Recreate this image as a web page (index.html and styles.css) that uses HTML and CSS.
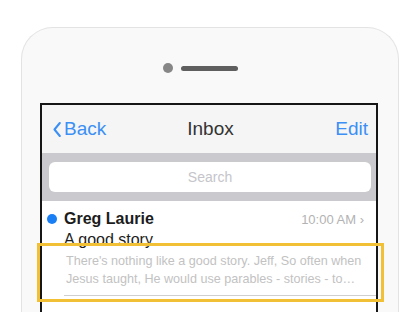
FILE: index.html
```html
<!doctype html>
<html lang="en">
    <head>
        <meta charset="UTF-8" />
        <meta name="viewport" content="width=device-width, initial-scale=1.0" />
        <title>Inbox</title>
        <link rel="stylesheet" href="styles.css">
    </head>
    <body>
        <div class="phone">
            <div class="sensors">
                <span class="camera"></span>
                <span class="speaker"></span>
            </div>

            <div class="screen">
                <div class="nav">
                    <a class="nav-back">
                        <svg width="8" height="15" viewBox="0 0 8 15">
                            <path d="M6.8 1 L1.5 7.5 L6.8 14" fill="none" stroke="#3b8ff5" stroke-width="2" stroke-linecap="round" stroke-linejoin="round" />
                        </svg>
                        Back
                    </a>
                    <span class="nav-title">Inbox</span>
                    <a class="nav-edit">Edit</a>
                </div>

                <div class="search-bar">
                    <div class="search-field">Search</div>
                </div>

                <div class="mail">
                    <span class="unread"></span>
                    <div class="mail-body">
                        <div class="mail-head">
                            <span class="sender">Greg Laurie</span>
                            <span class="time">10:00 AM ›</span>
                        </div>
                        <div class="subject">A good story</div>
                        <p class="preview">There's nothing like a good story. Jeff, So often when Jesus taught, He would use parables - stories - to…</p>
                    </div>
                </div>
            </div>
        </div>

        <!-- highlight over the preview text -->
        <div class="highlight"></div>
    </body>
</html>
```

FILE: styles.css
```css
body {
    margin: 0;
    background: #fff;
    font-family: "Liberation Sans", Arial, sans-serif;
    overflow: hidden;
}
.phone {
    box-sizing: border-box;
    width: 378px;
    height: 285px;
    margin: 27px 0 0 21px;
    background: #f9f9f9;
    border: 1px solid #e3e3e3;
    border-bottom: none;
    border-radius: 32px 32px 0 0;
    overflow: hidden;
}
.sensors {
    display: flex;
    align-items: center;
    gap: 8px;
    height: 10px;
    padding: 35px 0 0 141px;
}
.camera {
    width: 10px;
    height: 10px;
    border-radius: 50%;
    background: #878787;
}
.speaker {
    width: 57px;
    height: 5px;
    border-radius: 3px;
    background: #5f5f5f;
}
.screen {
    width: 334px;
    height: 207px;
    margin: 30px 0 0 18px;
    background: #fff;
    border: 2px solid #161616;
    border-bottom: none;
    overflow: hidden;
}
.nav {
    display: flex;
    align-items: center;
    justify-content: space-between;
    height: 48px;
    padding: 0 8px 0 11px;
    background: #f5f5f5;
    font-size: 19px;
}
.nav-back,
.nav-edit {
    display: flex;
    align-items: center;
    gap: 3px;
    color: #3b8ff5;
}
.nav-back {
    width: 90px;
}
.nav-edit {
    width: 90px;
    justify-content: flex-end;
}
.nav-title {
    color: #333;
}
.search-bar {
    padding: 9px 5px 9px 7px;
    background: #c9c9ce;
}
.search-field {
    height: 30px;
    line-height: 30px;
    border-radius: 6px;
    background: #fff;
    color: #c5c5ca;
    font-size: 14px;
    text-align: center;
}
.mail {
    display: grid;
    grid-template-columns: 22px 1fr;
}
.unread {
    width: 10px;
    height: 10px;
    margin: 13px 0 0 5px;
    border-radius: 50%;
    background: #1a7ef5;
}
.mail-body {
    padding: 8px 0 7px;
    border-bottom: 1px solid #cfcfcf;
}
.mail-head {
    display: flex;
    justify-content: space-between;
    align-items: baseline;
    padding-right: 12px;
    line-height: 20px;
}
.sender {
    font-size: 16px;
    font-weight: bold;
    color: #1c1c1c;
}
.time {
    font-size: 13px;
    color: #b3b3b3;
}
.subject {
    font-size: 16px;
    line-height: 20px;
    color: #1c1c1c;
}
.preview {
    margin: 2px 0 0;
    padding: 0 9px 0 2px;
    font-size: 12.6px;
    line-height: 18px;
    color: #c2c2c2;
}
.highlight {
    position: absolute;
    left: 37px;
    top: 243px;
    box-sizing: border-box;
    width: 347px;
    height: 59px;
    border: 3px solid #f2c035;
}
```
